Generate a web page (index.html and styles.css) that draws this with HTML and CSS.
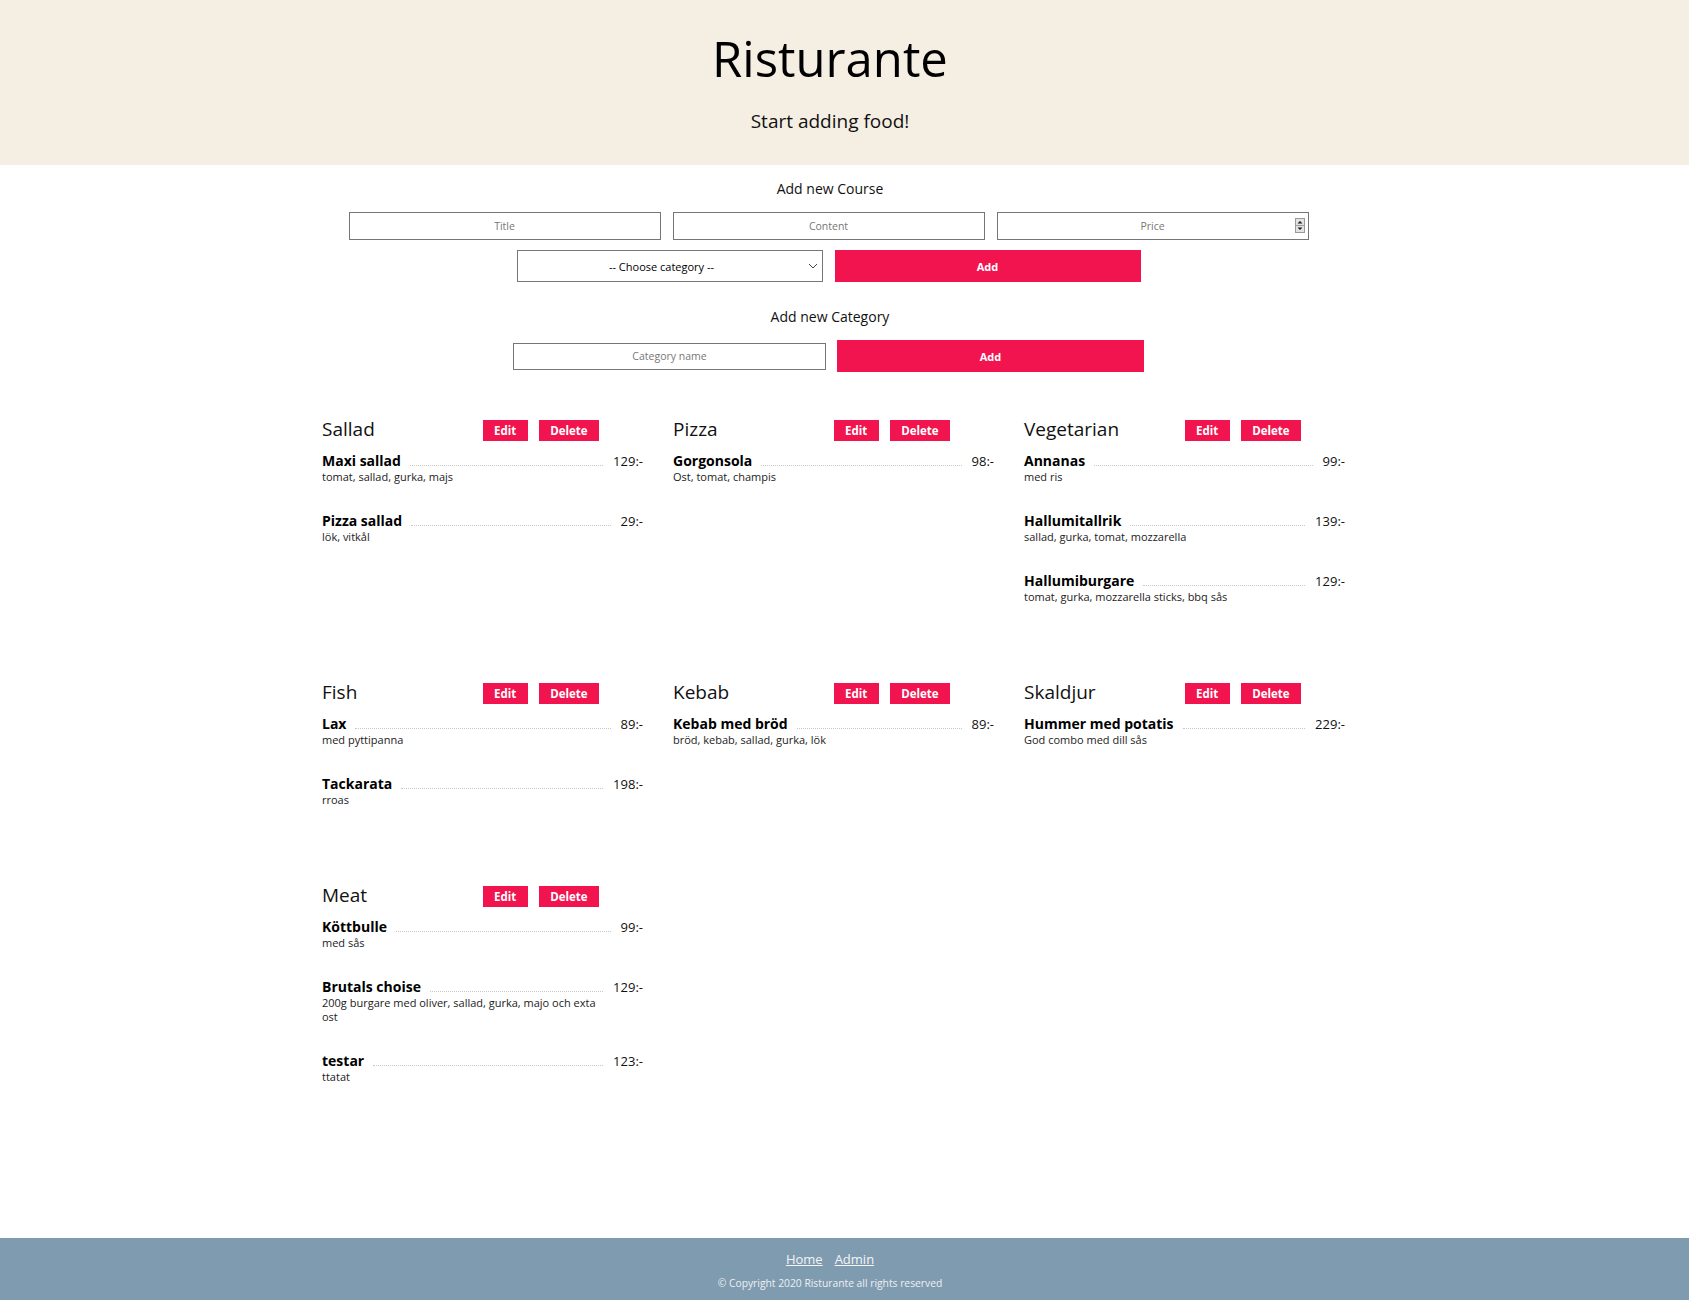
FILE: index.html
```html
<!DOCTYPE html>
<html lang="sv">
<head>
<meta charset="utf-8">
<title>Risturante</title>
<link rel="stylesheet" href="styles.css">
</head>
<body>
<header class="site-header">
  <h1 class="brand">Risturante</h1>
  <p class="tagline">Start adding food!</p>
</header>

<main class="main">
  <section class="course-form">
    <h2 class="form-title">Add new Course</h2>
    <div class="input-row">
      <input class="field course-field" type="text" placeholder="Title">
      <input class="field course-field" type="text" placeholder="Content">
      <div class="number-wrap">
        <input class="field field-number" type="number" placeholder="Price">
        <svg class="spinner" width="10" height="15" viewBox="0 0 10 15"><rect x="0.5" y="0.5" width="9" height="14" fill="#e3e3e3" stroke="#9a9a9a"/><line x1="0.5" y1="7.5" x2="9.5" y2="7.5" stroke="#9a9a9a"/><path d="M2.5 5.5 L5 3 L7.5 5.5 Z" fill="#1a1a1a"/><path d="M2.5 9.5 L5 12 L7.5 9.5 Z" fill="#1a1a1a"/></svg>
      </div>
    </div>
    <div class="select-row">
      <div class="select-wrap">
        <select class="select"><option>-- Choose category --</option></select>
        <svg class="chevron" width="10" height="6" viewBox="0 0 10 6"><path d="M1 1 L5 5 L9 1" fill="none" stroke="#444" stroke-width="1"/></svg>
      </div>
      <button class="btn-add" type="button">Add</button>
    </div>
  </section>

  <section class="category-form">
    <h2 class="form-title">Add new Category</h2>
    <div class="cat-row">
      <input class="field cat-field" type="text" placeholder="Category name">
      <button class="btn-add cat-btn" type="button">Add</button>
    </div>
  </section>

  <section class="menu">
    <div class="category">
      <div class="cat-head"><h3 class="cat-name">Sallad</h3><div class="cat-actions"><button class="btn-small">Edit</button><button class="btn-small">Delete</button></div></div>
      <div class="item"><div class="item-head"><span class="item-title">Maxi sallad</span><span class="dots"></span><span class="item-price">129:-</span></div><p class="item-desc">tomat, sallad, gurka, majs</p></div>
      <div class="item"><div class="item-head"><span class="item-title">Pizza sallad</span><span class="dots"></span><span class="item-price">29:-</span></div><p class="item-desc">lök, vitkål</p></div>
    </div>
    <div class="category">
      <div class="cat-head"><h3 class="cat-name">Pizza</h3><div class="cat-actions"><button class="btn-small">Edit</button><button class="btn-small">Delete</button></div></div>
      <div class="item"><div class="item-head"><span class="item-title">Gorgonsola</span><span class="dots"></span><span class="item-price">98:-</span></div><p class="item-desc">Ost, tomat, champis</p></div>
    </div>
    <div class="category">
      <div class="cat-head"><h3 class="cat-name">Vegetarian</h3><div class="cat-actions"><button class="btn-small">Edit</button><button class="btn-small">Delete</button></div></div>
      <div class="item"><div class="item-head"><span class="item-title">Annanas</span><span class="dots"></span><span class="item-price">99:-</span></div><p class="item-desc">med ris</p></div>
      <div class="item"><div class="item-head"><span class="item-title">Hallumitallrik</span><span class="dots"></span><span class="item-price">139:-</span></div><p class="item-desc">sallad, gurka, tomat, mozzarella</p></div>
      <div class="item"><div class="item-head"><span class="item-title">Hallumiburgare</span><span class="dots"></span><span class="item-price">129:-</span></div><p class="item-desc">tomat, gurka, mozzarella sticks, bbq sås</p></div>
    </div>
    <div class="category">
      <div class="cat-head"><h3 class="cat-name">Fish</h3><div class="cat-actions"><button class="btn-small">Edit</button><button class="btn-small">Delete</button></div></div>
      <div class="item"><div class="item-head"><span class="item-title">Lax</span><span class="dots"></span><span class="item-price">89:-</span></div><p class="item-desc">med pyttipanna</p></div>
      <div class="item"><div class="item-head"><span class="item-title">Tackarata</span><span class="dots"></span><span class="item-price">198:-</span></div><p class="item-desc">rroas</p></div>
    </div>
    <div class="category">
      <div class="cat-head"><h3 class="cat-name">Kebab</h3><div class="cat-actions"><button class="btn-small">Edit</button><button class="btn-small">Delete</button></div></div>
      <div class="item"><div class="item-head"><span class="item-title">Kebab med bröd</span><span class="dots"></span><span class="item-price">89:-</span></div><p class="item-desc">bröd, kebab, sallad, gurka, lök</p></div>
    </div>
    <div class="category">
      <div class="cat-head"><h3 class="cat-name">Skaldjur</h3><div class="cat-actions"><button class="btn-small">Edit</button><button class="btn-small">Delete</button></div></div>
      <div class="item"><div class="item-head"><span class="item-title">Hummer med potatis</span><span class="dots"></span><span class="item-price">229:-</span></div><p class="item-desc">God combo med dill sås</p></div>
    </div>
    <div class="category">
      <div class="cat-head"><h3 class="cat-name">Meat</h3><div class="cat-actions"><button class="btn-small">Edit</button><button class="btn-small">Delete</button></div></div>
      <div class="item"><div class="item-head"><span class="item-title">Köttbulle</span><span class="dots"></span><span class="item-price">99:-</span></div><p class="item-desc">med sås</p></div>
      <div class="item"><div class="item-head"><span class="item-title">Brutals choise</span><span class="dots"></span><span class="item-price">129:-</span></div><p class="item-desc">200g burgare med oliver, sallad, gurka, majo och exta ost</p></div>
      <div class="item"><div class="item-head"><span class="item-title">testar</span><span class="dots"></span><span class="item-price">123:-</span></div><p class="item-desc">ttatat</p></div>
    </div>
  </section>
</main>

<footer class="site-footer">
  <nav class="footer-links"><a href="#">Home</a><a href="#">Admin</a></nav>
  <p class="copyright">© Copyright 2020 Risturante all rights reserved</p>
</footer>
</body>
</html>
```

FILE: styles.css
```css
html, body {
  margin: 0;
  padding: 0;
}

body {
  font-family: "Open Sans", "Noto Sans", sans-serif;
  color: #111;
  background: #fff;
  min-height: 1300px;
  display: flex;
  flex-direction: column;
}

/* Header */
.site-header {
  background: #f5efe3;
  height: 165px;
  box-sizing: border-box;
  padding: 33px 29px 0 0;
  text-align: center;
}

.brand {
  margin: 0;
  font-size: 49px;
  line-height: 50px;
  font-weight: 400;
  color: #000;
}

.tagline {
  margin: 29px 0 0;
  font-size: 19px;
  line-height: 19px;
  font-weight: 400;
  color: #111;
}

/* Main */
.main {
  flex: 1;
  padding-right: 29px;
}

.form-title {
  margin: 0;
  font-size: 14px;
  line-height: 16px;
  font-weight: 400;
  text-align: center;
  color: #111;
}

.course-form {
  margin-top: 16px;
}

.input-row {
  width: 960px;
  margin: 15px auto 0;
  padding-right: 3px;
  display: flex;
  gap: 12px;
}

.field {
  box-sizing: border-box;
  height: 28px;
  border: 1px solid #767676;
  border-radius: 0;
  background: #fff;
  font-family: "Open Sans", "Noto Sans", sans-serif;
  font-size: 10.5px;
  text-align: center;
  color: #222;
  padding: 0 4px;
  margin: 0;
  outline: none;
}

.field::placeholder {
  color: #777;
}

.course-field {
  width: 312px;
  flex: 0 0 312px;
}

.number-wrap {
  position: relative;
  width: 312px;
  flex: 0 0 312px;
}

.field-number {
  width: 100%;
  -moz-appearance: textfield;
}

.field-number::-webkit-inner-spin-button,
.field-number::-webkit-outer-spin-button {
  -webkit-appearance: none;
  margin: 0;
}

.spinner {
  position: absolute;
  right: 4px;
  top: 6px;
}

.select-row {
  width: 624px;
  margin: 10px auto 0;
  padding-right: 3px;
  display: flex;
  gap: 12px;
}

.select-wrap {
  position: relative;
  flex: 0 0 306px;
}

.select {
  width: 100%;
  height: 32px;
  box-sizing: border-box;
  border: 1px solid #767676;
  border-radius: 0;
  background: #fff;
  -webkit-appearance: none;
  appearance: none;
  font-family: "Open Sans", "Noto Sans", sans-serif;
  font-size: 11px;
  color: #000;
  text-align: center;
  text-align-last: center;
  padding: 0 16px 0 0;
  margin: 0;
  outline: none;
}

.chevron {
  position: absolute;
  right: 5px;
  top: 13px;
}

.btn-add {
  flex: 0 0 306px;
  height: 32px;
  border: 0;
  border-radius: 0;
  background: #f1144f;
  color: #fff;
  font-family: "Open Sans", "Noto Sans", sans-serif;
  font-size: 11px;
  font-weight: 700;
  padding: 0;
  margin: 0;
  cursor: pointer;
}

.category-form {
  margin-top: 27px;
}

.cat-row {
  width: 631px;
  margin: 15px auto 0;
  padding-right: 3px;
  display: flex;
  align-items: center;
  gap: 11px;
}

.cat-field {
  width: 313px;
  flex: 0 0 313px;
  height: 27px;
}

.cat-btn {
  flex: 0 0 307px;
}

/* Menu */
.menu {
  width: 1023px;
  margin: 48px 0 0 calc(50% - 508px);
  display: grid;
  grid-template-columns: repeat(3, 321px);
  column-gap: 30px;
  row-gap: 79px;
  align-items: start;
}

.cat-head {
  display: flex;
  align-items: flex-start;
  height: 21px;
  margin-bottom: 11px;
}

.cat-name {
  flex: 0 0 50%;
  margin: 0;
  font-size: 19px;
  line-height: 19px;
  font-weight: 400;
  color: #111;
}

.cat-actions {
  display: flex;
  gap: 11px;
}

.btn-small {
  height: 21px;
  padding: 0 11.5px;
  border: 0;
  border-radius: 0;
  background: #f1144f;
  color: #fff;
  font-family: "Open Sans", "Noto Sans", sans-serif;
  font-size: 11.5px;
  font-weight: 700;
  margin: 0;
  cursor: pointer;
}

.item + .item {
  margin-top: 28px;
}

.item-head {
  display: flex;
  align-items: flex-end;
  height: 18px;
}

.item-title {
  font-size: 14px;
  line-height: 18px;
  font-weight: 700;
  color: #000;
  white-space: nowrap;
}

.dots {
  flex: 1;
  margin: 0 10px 4px 9px;
  border-bottom: 1px dotted #c8c8c8;
}

.item-price {
  font-size: 13px;
  line-height: 18px;
  color: #111;
  white-space: nowrap;
}

.item-desc {
  margin: 0;
  width: 282px;
  font-size: 11px;
  line-height: 14px;
  color: #222;
}

/* Footer */
.site-footer {
  margin-top: auto;
  background: #7f9bb0;
  padding: 12.5px 29px 0 0;
  height: 62px;
  box-sizing: border-box;
  text-align: center;
}

.footer-links {
  display: flex;
  justify-content: center;
  gap: 12px;
  font-size: 13px;
  line-height: 16px;
}

.footer-links a {
  color: #f4f4f4;
  text-decoration: underline;
}

.copyright {
  margin: 10px 0 0;
  font-size: 10.3px;
  line-height: 13px;
  color: #eef0f2;
}
```
